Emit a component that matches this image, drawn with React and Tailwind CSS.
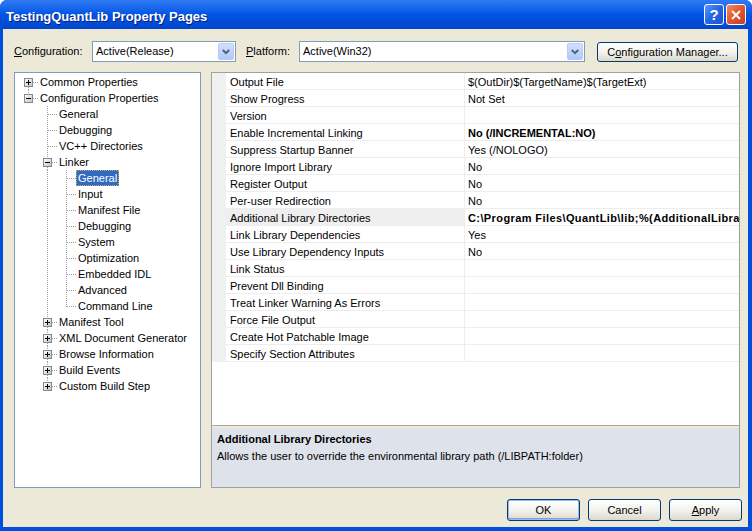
import React from "react";

const FONT = { fontFamily: '"Liberation Sans", Arial, sans-serif' };

const treeRows = [
  { label: "Common Properties", cells: [{ d: 1, r: 1, box: "plus" }] },
  { label: "Configuration Properties", cells: [{ u: 1, r: 1, box: "minus" }] },
  { label: "General", cells: [{}, { u: 1, d: 1, r: 1 }] },
  { label: "Debugging", cells: [{}, { u: 1, d: 1, r: 1 }] },
  { label: "VC++ Directories", cells: [{}, { u: 1, d: 1, r: 1 }] },
  { label: "Linker", cells: [{}, { u: 1, d: 1, r: 1, box: "minus" }] },
  { label: "General", cells: [{}, { u: 1, d: 1 }, { u: 1, d: 1, r: 1 }], selected: true },
  { label: "Input", cells: [{}, { u: 1, d: 1 }, { u: 1, d: 1, r: 1 }] },
  { label: "Manifest File", cells: [{}, { u: 1, d: 1 }, { u: 1, d: 1, r: 1 }] },
  { label: "Debugging", cells: [{}, { u: 1, d: 1 }, { u: 1, d: 1, r: 1 }] },
  { label: "System", cells: [{}, { u: 1, d: 1 }, { u: 1, d: 1, r: 1 }] },
  { label: "Optimization", cells: [{}, { u: 1, d: 1 }, { u: 1, d: 1, r: 1 }] },
  { label: "Embedded IDL", cells: [{}, { u: 1, d: 1 }, { u: 1, d: 1, r: 1 }] },
  { label: "Advanced", cells: [{}, { u: 1, d: 1 }, { u: 1, d: 1, r: 1 }] },
  { label: "Command Line", cells: [{}, { u: 1, d: 1 }, { u: 1, r: 1 }] },
  { label: "Manifest Tool", cells: [{}, { u: 1, d: 1, r: 1, box: "plus" }] },
  { label: "XML Document Generator", cells: [{}, { u: 1, d: 1, r: 1, box: "plus" }] },
  { label: "Browse Information", cells: [{}, { u: 1, d: 1, r: 1, box: "plus" }] },
  { label: "Build Events", cells: [{}, { u: 1, d: 1, r: 1, box: "plus" }] },
  { label: "Custom Build Step", cells: [{}, { u: 1, r: 1, box: "plus" }] },
];

const gridRows = [
  { n: "Output File", v: "$(OutDir)$(TargetName)$(TargetExt)" },
  { n: "Show Progress", v: "Not Set" },
  { n: "Version", v: "" },
  { n: "Enable Incremental Linking", v: "No (/INCREMENTAL:NO)", b: true },
  { n: "Suppress Startup Banner", v: "Yes (/NOLOGO)" },
  { n: "Ignore Import Library", v: "No" },
  { n: "Register Output", v: "No" },
  { n: "Per-user Redirection", v: "No" },
  { n: "Additional Library Directories", v: "C:\\Program Files\\QuantLib\\lib;%(AdditionalLibraryDirectories)", b: true, sel: true, wide: true },
  { n: "Link Library Dependencies", v: "Yes" },
  { n: "Use Library Dependency Inputs", v: "No" },
  { n: "Link Status", v: "" },
  { n: "Prevent Dll Binding", v: "" },
  { n: "Treat Linker Warning As Errors", v: "" },
  { n: "Force File Output", v: "" },
  { n: "Create Hot Patchable Image", v: "" },
  { n: "Specify Section Attributes", v: "" },
];

function TreeCell({ c, id }) {
  const dot = { stroke: "#A0A0A0", strokeWidth: 1, strokeDasharray: "1 1", shapeRendering: "crispEdges" };
  return (
    <svg width="19" height="16" className="block shrink-0">
      {c.u && <line x1="9.5" y1="0" x2="9.5" y2={c.box ? 4 : 9} {...dot} />}
      {c.d && <line x1="9.5" y1={c.box ? 13 : 8} x2="9.5" y2="16" {...dot} />}
      {c.r && <line x1={c.box ? 14 : 10} y1="8.5" x2="19" y2="8.5" {...dot} />}
      {c.box && (
        <g>
          <defs>
            <linearGradient id={`g${id}`} x1="0" y1="0" x2="1" y2="1">
              <stop offset="0" stopColor="#FFFFFF" />
              <stop offset="1" stopColor="#C6C2B6" />
            </linearGradient>
          </defs>
          <rect x="5.5" y="4.5" width="8" height="8" fill={`url(#g${id})`} stroke="#7F8A98" shapeRendering="crispEdges" />
          <line x1="7" y1="8.5" x2="12" y2="8.5" stroke="#000" shapeRendering="crispEdges" />
          {c.box === "plus" && <line x1="9.5" y1="6" x2="9.5" y2="11" stroke="#000" shapeRendering="crispEdges" />}
        </g>
      )}
    </svg>
  );
}

function Chevron() {
  return (
    <svg width="8" height="6" viewBox="0 0 8 6" className="block">
      <path d="M0.8 1 L4 4.2 L7.2 1" fill="none" stroke="#4D6185" strokeWidth="2" />
    </svg>
  );
}

function Combo({ w, text }) {
  return (
    <div className={`${w} h-[21px] border border-[#7F9DB9] bg-white flex items-stretch p-[1px]`}>
      <div className="flex-1 flex items-center pl-[2px] text-[11px] text-black">{text}</div>
      <div className="w-[16px] rounded-[2px] border border-[#B9CCF7] bg-gradient-to-b from-[#D2E0FD] to-[#B3C8F6] flex items-center justify-center">
        <Chevron />
      </div>
    </div>
  );
}

function XPButton({ children, w, isDefault }) {
  return (
    <div
      className={`${w} h-[22px] rounded-[3px] border border-[#003C74] bg-gradient-to-b from-[#FFFFFF] via-[#F4F3EE] to-[#DCD8CC] flex items-center justify-center text-[11px] text-black ${
        isDefault ? "shadow-[inset_0_0_0_1px_#9DBCEB,inset_0_-1px_0_1px_#7DA2DE]" : ""
      }`}
    >
      {children}
    </div>
  );
}

export default function App() {
  return (
    <div style={FONT} className="w-[752px] h-[531px] bg-white overflow-hidden select-none">
      <div className="w-full h-full flex flex-col rounded-t-[7px] overflow-hidden bg-[#0050DE]">
        {/* Title bar */}
        <div className="h-[29px] shrink-0 flex items-center pl-[6px] pr-[6px] bg-gradient-to-b from-[#2F7BF4] via-[#0055E5] to-[#0046CC]">
          <div
            className="flex-1 text-white font-bold text-[13px] leading-none pt-[3px]"
            style={{ textShadow: "1px 1px 0 #0A1E7E" }}
          >
            TestingQuantLib Property Pages
          </div>
          <div className="flex gap-[2px]">
            <div className="w-[20px] h-[21px] rounded-[3px] border border-white bg-gradient-to-br from-[#5A95FF] via-[#2663E6] to-[#1D55D6] flex items-center justify-center text-white font-bold text-[15px] leading-none">
              ?
            </div>
            <div className="w-[20px] h-[21px] rounded-[3px] border border-white bg-gradient-to-br from-[#EE8A6A] via-[#E0552E] to-[#C5401B] flex items-center justify-center">
              <svg width="10" height="10" viewBox="0 0 10 10">
                <path d="M1 1 L9 9 M9 1 L1 9" stroke="#fff" strokeWidth="2" />
              </svg>
            </div>
          </div>
        </div>

        {/* Client */}
        <div className="flex-1 ml-[3px] mr-[4px] mb-[4px] bg-[#ECE9D8] flex flex-col pl-[11px] pt-[12px] text-[11px] text-black">
          {/* Config row */}
          <div className="flex items-start h-[21px]">
            <div className="w-[78px] h-[21px] flex items-center">
              <span className="underline">C</span>onfiguration:
            </div>
            <Combo w="w-[144px]" text="Active(Release)" />
            <div className="w-[53px] ml-[10px] h-[21px] flex items-center">
              <span className="underline">P</span>latform:
            </div>
            <Combo w="w-[286px]" text="Active(Win32)" />
            <div className="ml-[12px] mt-[1px]">
              <div className="w-[141px] h-[20px] rounded-[3px] border border-[#003C74] bg-gradient-to-b from-[#FFFFFF] via-[#F4F3EE] to-[#DCD8CC] flex items-center justify-center text-[11px]">
                C<span className="underline">o</span>nfiguration Manager...
              </div>
            </div>
          </div>

          {/* Panels */}
          <div className="flex gap-[10px] mt-[10px] h-[416px]">
            {/* Tree */}
            <div className="w-[187px] h-full border border-[#7F9DB9] bg-white pt-[1px] overflow-hidden">
              {treeRows.map((row, i) => (
                <div key={i} className="flex items-center h-[16px] pl-[4px]">
                  {row.cells.map((c, j) => (
                    <TreeCell key={j} c={c} id={`${i}-${j}`} />
                  ))}
                  <span
                    className={`h-[16px] flex items-center px-[2px] whitespace-nowrap ${
                      row.selected ? "bg-[#316AC5] text-white outline outline-1 outline-dotted outline-[#D9A845] -outline-offset-1" : ""
                    }`}
                  >
                    {row.label}
                  </span>
                </div>
              ))}
            </div>

            {/* Property grid */}
            <div className="w-[529px] h-full border border-[#A0A0A0] bg-white flex flex-col overflow-hidden">
              <div className="h-[352px] flex flex-col">
                {gridRows.map((r, i) => (
                  <div key={i} className="flex h-[17px] shrink-0">
                    <div className="w-[14px] bg-[#F0F0F0]" />
                    <div
                      className={`w-[238px] border-b border-[#EDEDED] flex items-center pt-[2px] pl-[4px] whitespace-nowrap ${
                        r.sel ? "bg-[#EFEFEF]" : ""
                      }`}
                    >
                      {r.n}
                    </div>
                    <div className="w-[1px] bg-[#EDEDED]" />
                    <div
                      className={`flex-1 min-w-0 border-b border-[#EDEDED] flex items-center pt-[2px] pl-[3px] whitespace-nowrap overflow-hidden ${
                        r.b ? "font-bold" : ""
                      } ${r.wide ? "tracking-[0.4px]" : ""}`}
                    >
                      {r.v}
                    </div>
                  </div>
                ))}
                <div className="flex-1 bg-white" />
              </div>
              <div className="h-[1px] bg-[#ACA899]" />
              <div className="h-[2px] bg-[#ECE9D8]" />
              <div className="flex-1 bg-[#DEE2EA] pl-[5px] pt-[3px] leading-[17px]">
                <div className="font-bold">Additional Library Directories</div>
                <div>Allows the user to override the environmental library path (/LIBPATH:folder)</div>
              </div>
            </div>
          </div>

          {/* Buttons */}
          <div className="flex justify-end gap-[8px] mt-[11px] pr-[6px]">
            <XPButton w="w-[73px]" isDefault>OK</XPButton>
            <XPButton w="w-[73px]">Cancel</XPButton>
            <XPButton w="w-[73px]">
              <span>
                <span className="underline">A</span>pply
              </span>
            </XPButton>
          </div>
        </div>
      </div>
    </div>
  );
}
